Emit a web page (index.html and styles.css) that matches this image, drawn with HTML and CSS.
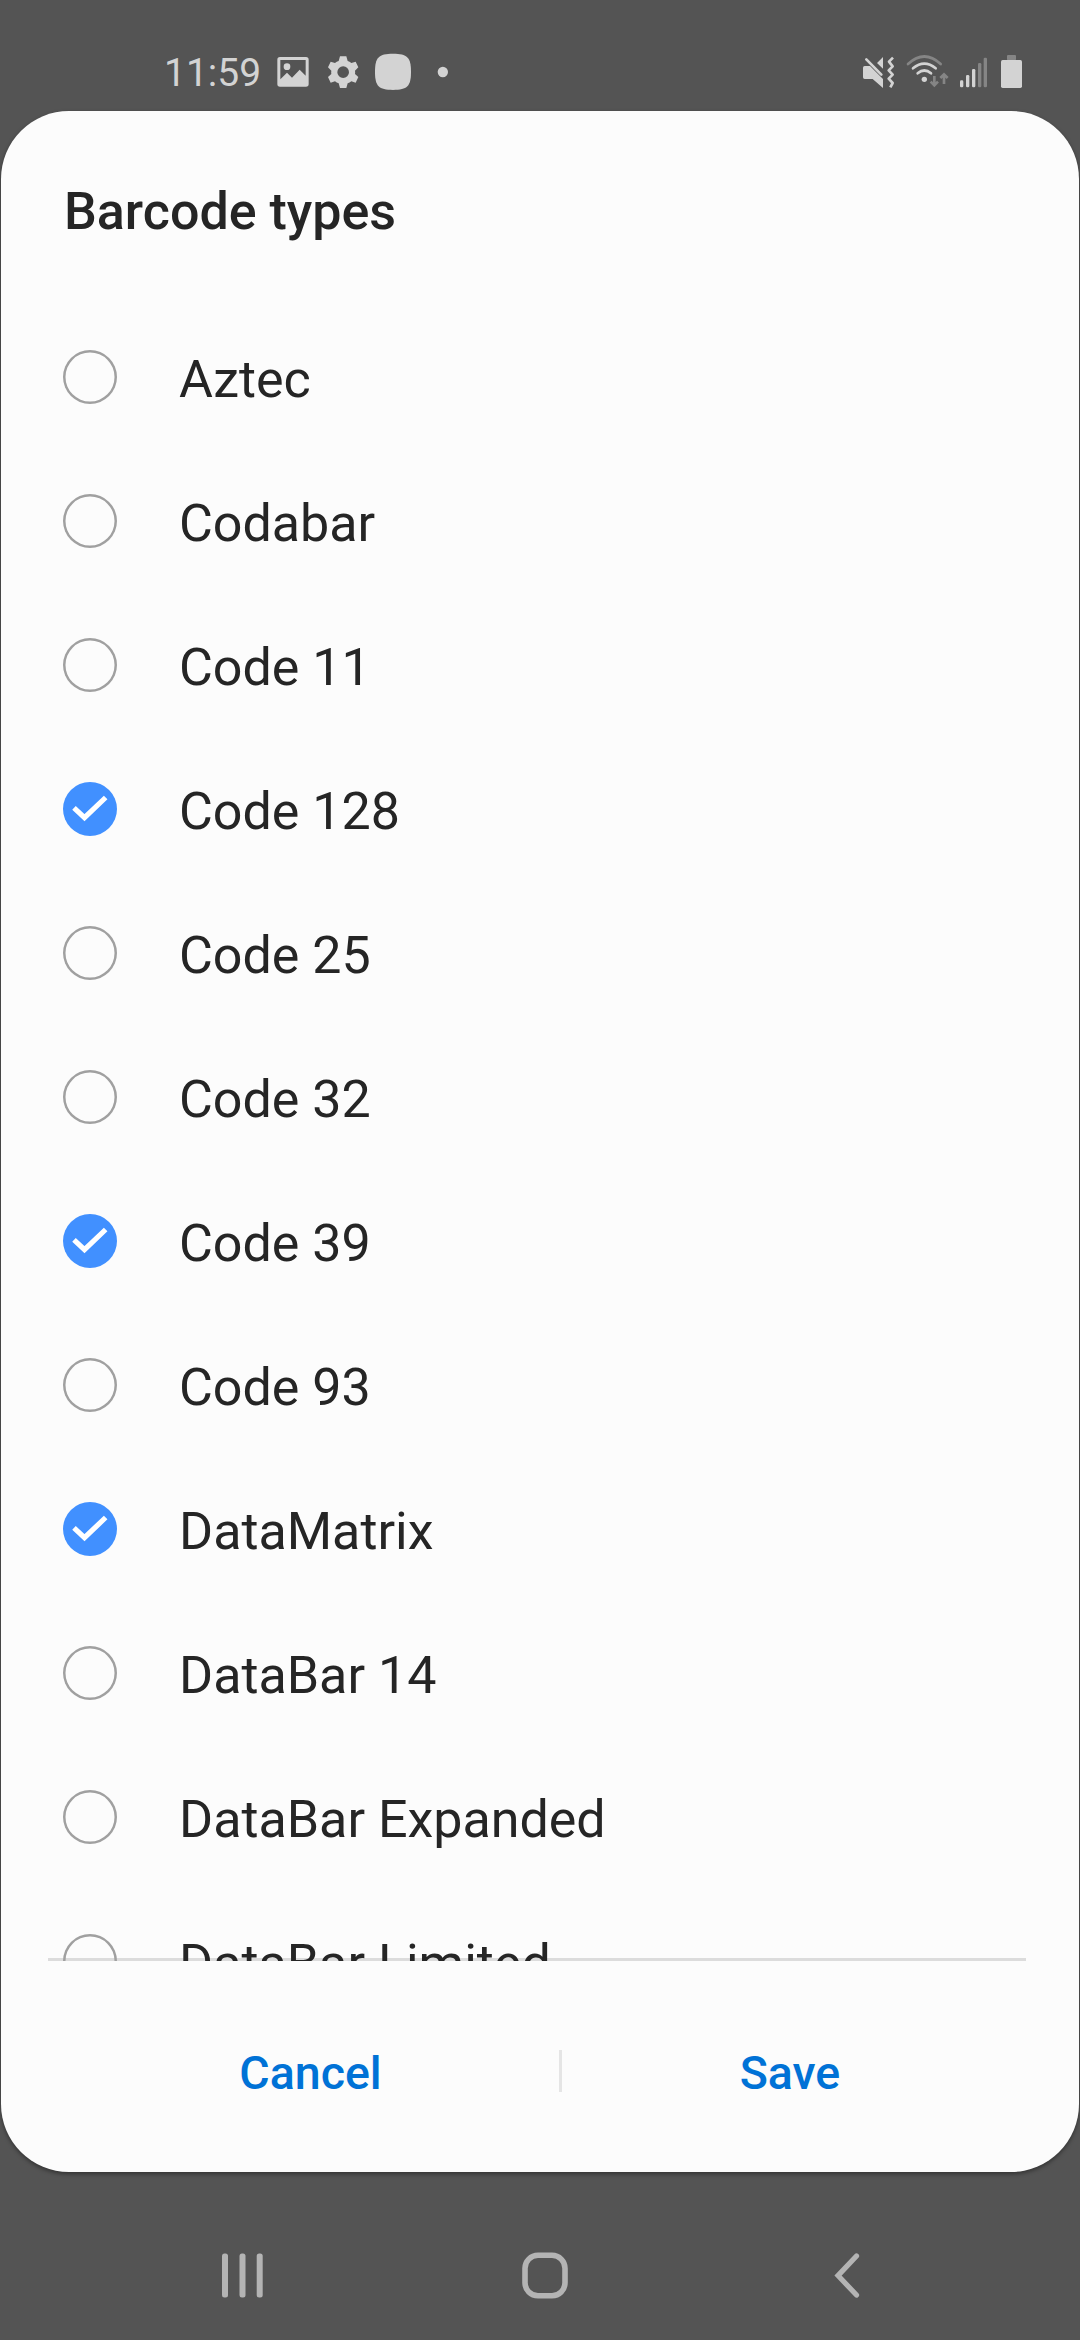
FILE: index.html
```html
<!DOCTYPE html>
<html lang="en">
<head>
<meta charset="utf-8">
<title>Barcode types</title>
<link rel="stylesheet" href="styles.css">
</head>
<body>
<svg class="defs" width="0" height="0">
  <symbol id="check" viewBox="0 0 162 162">
    <path d="M33 77.500 L64.500 107 L128 46.500" fill="none" stroke="#fff" stroke-width="15.500"/>
  </symbol>
</svg>
<header class="status">
  <span class="time">11:59</span>
  <svg class="i-photo" viewBox="390 0 150 210"><path fill-rule="evenodd" d="M420 51H498Q506 51 506 59V132Q506 140 498 140H420Q412 140 412 132V59Q412 51 420 51ZM421 60V118L441 98L456 113L479 89L497 107V60Z"/><circle cx="441" cy="80" r="10"/></svg>
  <svg class="i-gear" viewBox="540 0 135 210"><path fill-rule="evenodd" d="M600 49H619L623 63Q629 65 634 69L647 65L655 82L645 92Q646 97 645 102L655 111L647 128L634 124Q629 128 623 130L619 144H600L596 130Q590 128 585 124L572 128L564 111L574 102Q573 97 574 92L564 82L572 65L585 69Q590 65 596 63ZM609.500 79A17.500 17.500 0 1 0 609.500 114A17.500 17.500 0 1 0 609.500 79Z"/></svg>
  <svg class="i-app" viewBox="675 0 165 210"><path d="M759 41C802 41 813 52 813 95.500C813 139 802 150 759 150C716 150 705 139 705 95.500C705 52 716 41 759 41Z"/></svg>
  <svg class="i-dot" viewBox="840 0 120 210"><circle cx="908.500" cy="96" r="15.500"/></svg>
  <span class="spacer"></span>
  <svg class="i-mute" viewBox="60 0 120 210"><path d="M74 78H90L129 117V144L98 117H74Q69 117 69 112V83Q69 78 74 78ZM111 69L129 51V86Z"/><path class="stroke" stroke-width="8" stroke-linecap="round" d="M79 58L124 104"/><path class="stroke" stroke-width="8" stroke-linejoin="round" d="M159 53L147 65L158 79L146 91L158 104L146 116L158 129L151 142"/></svg>
  <svg class="i-wifi" viewBox="180 0 165 210"><g class="stroke" stroke-width="8" stroke-linecap="round"><path class="dim" d="M204 72Q253 27 302 72"/><path d="M219 85Q253 57 287 85"/><path d="M233 100Q253 83 273 100"/></g><circle cx="253" cy="118" r="8"/><g class="stroke dim" stroke-width="8"><path d="M283 108V136M272 125L283 136L294 125"/><path d="M312 132V103M301 114L312 103L323 114"/></g></svg>
  <svg class="i-signal" viewBox="345 0 120 210"><rect x="360" y="121" width="10" height="21" rx="4"/><rect x="378" y="105" width="10" height="37" rx="4"/><rect x="396" y="87" width="10" height="55" rx="4"/><rect class="dimfill" x="414" y="69" width="10" height="73" rx="4"/><rect class="dimfill" x="431" y="53" width="10" height="89" rx="4"/></svg>
  <svg class="i-battery" viewBox="465 0 120 210"><rect class="dimfill" x="501" y="45" width="27" height="16" rx="3"/><rect x="483" y="60" width="63" height="84" rx="5"/></svg>
</header>
<main class="sheet">
  <h1 class="title">Barcode types</h1>
  <ul class="list">
    <li class="row"><span class="box"></span><span class="label">Aztec</span></li>
    <li class="row"><span class="box"></span><span class="label">Codabar</span></li>
    <li class="row"><span class="box"></span><span class="label">Code 11</span></li>
    <li class="row"><svg class="box on"><use href="#check"/></svg><span class="label">Code 128</span></li>
    <li class="row"><span class="box"></span><span class="label">Code 25</span></li>
    <li class="row"><span class="box"></span><span class="label">Code 32</span></li>
    <li class="row"><svg class="box on"><use href="#check"/></svg><span class="label">Code 39</span></li>
    <li class="row"><span class="box"></span><span class="label">Code 93</span></li>
    <li class="row"><svg class="box on"><use href="#check"/></svg><span class="label">DataMatrix</span></li>
    <li class="row"><span class="box"></span><span class="label">DataBar 14</span></li>
    <li class="row"><span class="box"></span><span class="label">DataBar Expanded</span></li>
    <li class="row"><span class="box"></span><span class="label">DataBar Limited</span></li>
  </ul>
  <div class="actions">
    <button class="action cancel">Cancel</button>
    <span class="rule"></span>
    <button class="action save">Save</button>
  </div>
</main>
<nav class="nav">
  <svg class="n-recents" viewBox="0 0 41 46"><rect x="0" y="1.500" width="6" height="44" rx="2.500"/><rect x="17.500" y="1.500" width="6" height="44" rx="2.500"/><rect x="34.700" y="1.500" width="6" height="44" rx="2.500"/></svg>
  <svg class="n-home" viewBox="0 0 46 47"><rect x="3" y="3.300" width="40" height="40.500" rx="13" fill="none" stroke="#b4b4b4" stroke-width="5.600"/></svg>
  <svg class="n-back" viewBox="0 0 26 46"><path d="M22.500 4L4 23.600L22.500 43" fill="none" stroke="#b4b4b4" stroke-width="5.200" stroke-linecap="round"/></svg>
</nav>
</body>
</html>
```
FILE: styles.css
```css
* { box-sizing: border-box; }
body {
  margin: 0;
  width: 1080px;
  height: 2340px;
  display: flex;
  flex-direction: column;
  overflow: hidden;
  background: #545454;
  font-family: Roboto, sans-serif;
}
.defs { position: absolute; }

.status {
  height: 111px;
  flex: none;
  display: flex;
  padding: 40px 45px 0 164px;
  color: #d3d3d3;
}
.status svg { height: 70px; flex: none; fill: #d3d3d3; }
.time { width: 106px; font-size: 39px; line-height: 67px; white-space: nowrap; }
.spacer { flex: 1; }
.status .stroke { fill: none; stroke: #d3d3d3; }
.status .dim { stroke: #858585; }
.status .dimfill { fill: #858585; }
.i-photo { width: 50px; }
.i-gear { width: 45px; }
.i-app { width: 55px; }
.i-dot { width: 40px; }
.i-mute { width: 40px; }
.i-wifi { width: 55px; }
.i-signal { width: 40px; }
.i-battery { width: 40px; }

.sheet {
  margin: 0 1px;
  height: 2061px;
  flex: none;
  display: flex;
  flex-direction: column;
  border-radius: 68px;
  background: #fcfcfc;
  box-shadow: 0 2px 4px rgba(0, 0, 0, .4);
  color: #252525;
}
.title {
  margin: 0;
  height: 194px;
  padding: 71px 63px 0;
  font-size: 52px;
  line-height: 60px;
  font-weight: 500;
}
.list {
  margin: 0;
  padding: 0;
  height: 1656px;
  overflow: hidden;
  list-style: none;
  background: linear-gradient(#dcdcdc, #dcdcdc) 47px 100% / 978px 3px no-repeat;
}
.row {
  height: 144px;
  padding-left: 62px;
  display: flex;
  align-items: center;
}
.box {
  width: 54px;
  height: 54px;
  flex: none;
  box-shadow: inset 0 0 0 2.500px #a0a0a0;
  border-radius: 50%;
}
.box.on { box-shadow: none; background: #4190ff; }
.label { margin-left: 62px; padding-top: 6px; font-size: 52px; line-height: 60px; }

.actions {
  height: 211px;
  padding: 0 61px;
  display: flex;
}
.action {
  margin: 0;
  padding: 14px 0 0;
  height: 211px;
  border: 0;
  background: none;
  color: #0072d6;
  font: 500 46.500px/1.2 Roboto, sans-serif;
}
.cancel { width: 497px; }
.save { width: 456px; }
.rule { width: 3px; height: 42px; margin-top: 89px; background: #e5e5e5; }

.nav {
  flex: 1;
  display: flex;
  padding: 80px 0 0 222px;
  fill: #b4b4b4;
}
.nav svg { flex: none; }
.n-recents { width: 41px; height: 46px; }
.n-home { width: 46px; height: 47px; margin-left: 259px; }
.n-back { width: 26px; height: 46px; margin-left: 266px; }
```
